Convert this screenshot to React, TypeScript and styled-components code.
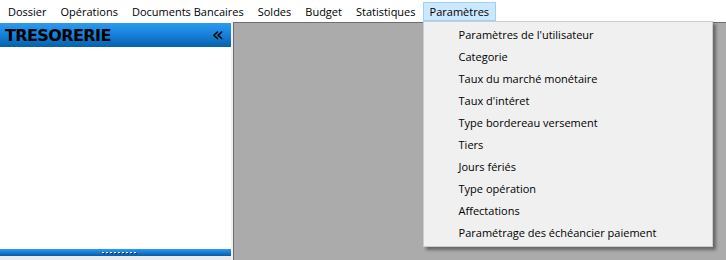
import React from 'react';
import styled, { createGlobalStyle } from 'styled-components';

const menus = ['Dossier', 'Opérations', 'Documents Bancaires', 'Soldes', 'Budget', 'Statistiques', 'Paramètres'];

const parametres = [
  "Paramètres de l'utilisateur",
  'Categorie',
  'Taux du marché monétaire',
  "Taux d'intéret",
  'Type bordereau versement',
  'Tiers',
  'Jours fériés',
  'Type opération',
  'Affectations',
  'Paramétrage des échéancier paiement',
];

export default function App() {
  return (
    <>
      <GlobalStyle />
      <Window>
        <MenuBar>
          {menus.map((label) => (
            <MenuItem key={label} $open={label === 'Paramètres'}>
              {label}
              {label === 'Paramètres' && (
                <Dropdown>
                  {parametres.map((entry) => (
                    <DropdownItem key={entry}>{entry}</DropdownItem>
                  ))}
                </Dropdown>
              )}
            </MenuItem>
          ))}
        </MenuBar>

        <Main>
          <SidePanel>
            <PanelHeader>
              <PanelTitle>TRESORERIE</PanelTitle>
              <Collapse>«</Collapse>
            </PanelHeader>
            <PanelBody />
            <PanelFooter>
              <Grip />
            </PanelFooter>
            <PanelBottom />
          </SidePanel>
          <Splitter />
          <Workspace />
        </Main>
      </Window>
    </>
  );
}

const GlobalStyle = createGlobalStyle`
  html, body {
    margin: 0;
    padding: 0;
    background: #fff;
  }
  body {
    font-family: "Open Sans", "Noto Sans", sans-serif;
  }
`;

const Window = styled.div`
  width: 726px;
  height: 260px;
  display: flex;
  flex-direction: column;
  overflow: hidden;
  background: #fff;
`;

const MenuBar = styled.div`
  height: 22px;
  display: flex;
  align-items: flex-start;
  padding: 2px 0 0 1px;
  box-sizing: border-box;
  background: #fff;
  font-size: 11px;
  color: #000;
`;

const MenuItem = styled.div<{ $open?: boolean }>`
  position: relative;
  height: 19px;
  line-height: 17px;
  padding: 0 6px;
  box-sizing: border-box;
  border: 1px solid ${(p) => (p.$open ? '#99d1ff' : 'transparent')};
  background: ${(p) => (p.$open ? '#cce8ff' : 'transparent')};
  white-space: nowrap;
`;

const Dropdown = styled.div`
  position: absolute;
  top: 18px;
  left: -1px;
  width: 290px;
  padding: 2px 0;
  box-sizing: border-box;
  background: #f0f0f0;
  border: 1px solid #cccccc;
  box-shadow: 3px 3px 3px rgba(0, 0, 0, 0.4);
  z-index: 10;
`;

const DropdownItem = styled.div`
  height: 22px;
  line-height: 22px;
  padding-left: 35px;
  font-size: 11px;
  color: #000;
`;

const Main = styled.div`
  flex: 1;
  display: flex;
  flex-direction: row;
  min-height: 0;
`;

const SidePanel = styled.div`
  width: 231px;
  display: flex;
  flex-direction: column;
  background: #fff;
  padding-top: 1px;
`;

const PanelHeader = styled.div`
  height: 24px;
  display: flex;
  align-items: center;
  justify-content: space-between;
  padding: 0 7px 0 5px;
  background: linear-gradient(to bottom, #2d9bf3 0%, #1680d8 50%, #0561ab 100%);
`;

const PanelTitle = styled.div`
  font-family: "DejaVu Sans", sans-serif;
  font-weight: bold;
  font-size: 16px;
  letter-spacing: -0.6px;
  color: #000;
`;

const Collapse = styled.div`
  font-family: "DejaVu Sans", sans-serif;
  font-size: 20px;
  color: #000;
  line-height: 1;
  margin-top: -3px;
`;

const PanelBody = styled.div`
  flex: 1;
  background: #fff;
`;

const PanelFooter = styled.div`
  height: 7px;
  display: flex;
  justify-content: center;
  align-items: center;
  background: linear-gradient(to bottom, #2d9bf3 0%, #1275cc 60%, #0a5aa0 100%);
`;

const Grip = styled.div`
  width: 35px;
  height: 3px;
  margin-left: 5px;
  background-image: radial-gradient(circle, #fff 0.9px, transparent 1.1px);
  background-size: 4px 3px;
  filter: drop-shadow(1px 1px 0 #14385e);
`;

const PanelBottom = styled.div`
  height: 4px;
  background: #e8eaee;
`;

const Splitter = styled.div`
  width: 2px;
  background: #f0f0f0;
  border-right: 1px solid #6e6e6e;
`;

const Workspace = styled.div`
  flex: 1;
  background: #ababab;
  border-top: 1px solid #6e6e6e;
`;
